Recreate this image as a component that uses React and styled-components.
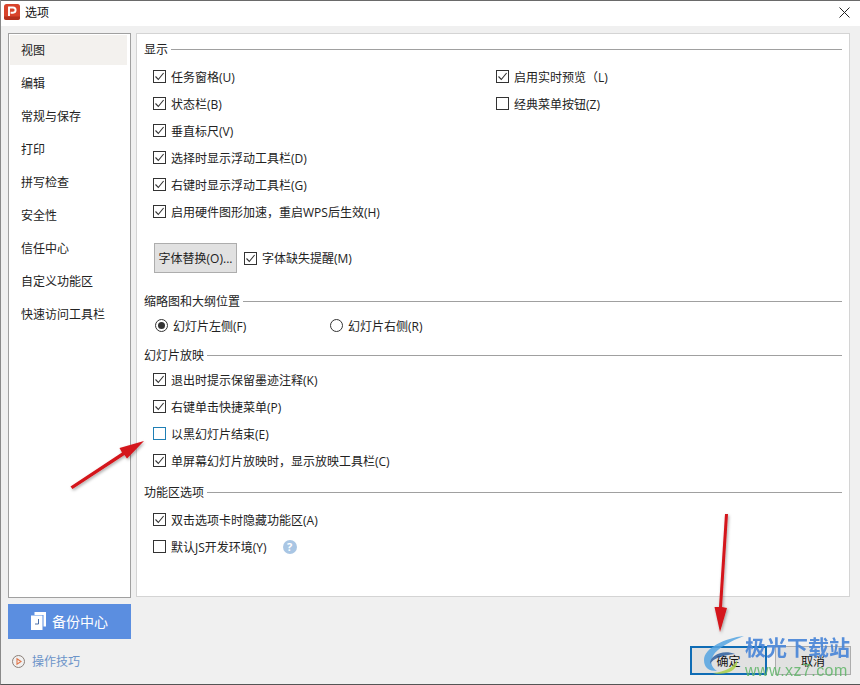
import React from "react";
import styled, { createGlobalStyle } from "styled-components";

const Global = createGlobalStyle`
  html, body { margin: 0; padding: 0; background: #f0f0f0; }
  body { font-family: "Open Sans", "Noto Sans CJK SC", sans-serif; font-size: 12px; color: #222; }
  * { box-sizing: border-box; }
`;
const Win = styled.div`
  position: relative; width: 860px; height: 685px; overflow: hidden; background: #f0f0f0;
  display: flex; flex-direction: column;
  border-bottom: 1px solid #555; border-left: 1px solid #8a8a8a;
`;
const TitleBar = styled.div`
  height: 26px; background: #fff; display: flex; align-items: center; gap: 5px; padding: 0 10px 3px 3px;
  flex: none; border-top: 1px solid #6a6a6a;
`;
const TitleText = styled.span`font-size: 12px; color: #111; flex: 1;`;
const Body = styled.div`
  display: grid; grid-template-columns: 123px 714px; gap: 5px; padding: 7px 0 0 7px; height: 572px; flex: none;
`;
const Sidebar = styled.nav`
  height: 565px; background: #fff; border: 1px solid #a0a0a0; padding: 1px 3px 0 1px;
  display: flex; flex-direction: column; gap: 3px;
`;
const NavItem = styled.div`
  height: 30px; display: flex; align-items: center; padding-left: 11px; font-size: 12px;
  background: ${p => (p.$active ? "#f3f1ee" : "transparent")}; color: #222;
`;
const Panel = styled.main`
  height: 564px; background: #fff; border: 1px solid #d4d4d4; padding: 6px 7px 0 7px;
`;
const Heading = styled.div`
  height: 18px; display: flex; align-items: center; gap: 3px; margin-top: ${p => p.$mt || 0}px; color: #222;
  &::after { content: ""; flex: 1; height: 1px; background: #a0a0a0; }
`;
const Columns = styled.div`
  display: grid; grid-template-columns: 343px 1fr; margin-top: ${p => p.$mt || 0}px; padding-left: 9px;
`;
const Rows = styled.div`
  display: flex; flex-direction: column; margin-top: ${p => p.$mt || 0}px; padding-left: ${p => p.$pl ?? 9}px;
`;
const Row = styled.div`
  height: 27px; display: flex; align-items: center; gap: 5px; white-space: nowrap;
`;
const Box = styled.span`
  width: 13px; height: 13px; flex: none; background: #fff; display: inline-flex;
  align-items: center; justify-content: center;
  border: 1px solid ${p => (p.$focus ? "#1f7fb5" : "#333")};
`;
const RadioRing = styled.span`
  width: 13px; height: 13px; flex: none; border-radius: 50%; border: 1px solid #333; background: #fff;
  display: inline-flex; align-items: center; justify-content: center;
  &::after { content: ""; width: 7px; height: 7px; border-radius: 50%; background: ${p => (p.$on ? "#333" : "transparent")}; }
`;
const RadioRow = styled.div`
  height: 27px; display: grid; grid-template-columns: 175px 1fr; padding-left: 11px; margin-top: 2px;
`;
const FontRow = styled.div`
  height: 30px; display: flex; align-items: center; margin-top: 18px; padding-left: 10px; gap: 7px;
`;
const SmallBtn = styled.button`
  width: 83px; height: 30px; border: 1px solid #adadad; background: #e1e1e1; font: inherit; color: #222; padding: 0;
`;
const Help = styled.span`
  width: 14px; height: 14px; border-radius: 50%; background: #a9c6e4; color: #fff; font-size: 11px; font-weight: 700;
  display: inline-flex; align-items: center; justify-content: center; margin-left: 11px;
`;
const Footer = styled.div`
  display: grid; grid-template-columns: 123px 1fr; padding: 0 9px 0 7px; flex: 1; min-height: 0; gap: 5px;
`;
const FooterLeft = styled.div`display: flex; flex-direction: column; padding-top: 6px;`;
const Backup = styled.div`
  height: 35px; background: #5b8ee0; color: #fff; font-size: 14px; display: flex; align-items: center;
  justify-content: center; gap: 6px; padding-bottom: 1px;
`;
const Tips = styled.div`
  display: flex; align-items: center; gap: 7px; color: #6c94c9; margin-top: 13px; padding-left: 4px; height: 18px;
`;
const FooterRight = styled.div`
  display: flex; justify-content: flex-end; gap: 8px; padding-top: 48px;
`;
const Btn = styled.button`
  width: ${p => (p.$primary ? 77 : 76)}px; height: 29px; font: inherit; color: #111; background: #e1e1e1; padding: 0;
  border: ${p => (p.$primary ? "2px solid #0f6cb5" : "1px solid #adadad")};
`;
const Overlay = styled.svg`position: absolute; left: 0; top: 0; pointer-events: none;`;
const Mark = styled.div`
  position: absolute; left: 744px; top: 633px; width: 112px; pointer-events: none; line-height: 1;
`;
const MarkTitle = styled.div`
  font-size: 21px; font-weight: 700; color: #4a86d8; opacity: .92; white-space: nowrap;
  font-family: "Noto Sans CJK SC", sans-serif; line-height: 26px;
`;
const MarkUrl = styled.div`
  font-size: 16px; font-weight: 400; color: #5fb568; opacity: .85; letter-spacing: .45px; margin-top: 3px;
  font-family: "Liberation Sans", sans-serif; white-space: nowrap; line-height: 17px;
`;

const Check = ({ on = true, focus }) => (
  <Box $focus={focus}>
    {on && (
      <svg width="11" height="11" viewBox="0 0 11 11" fill="none">
        <path d="M1.5 5.5 L4.3 8.5 L9.6 2" stroke="#333" strokeWidth="1.1" />
      </svg>
    )}
  </Box>
);
const CheckRow = ({ label, on, focus, children }) => (
  <Row><Check on={on} focus={focus} /><span>{label}</span>{children}</Row>
);

const nav = ["视图", "编辑", "常规与保存", "打印", "拼写检查", "安全性", "信任中心", "自定义功能区", "快速访问工具栏"];

export default function App() {
  return (
    <>
      <Global />
      <Win>
        <TitleBar>
          <svg width="16" height="16" viewBox="0 0 16 16">
            <rect width="16" height="16" rx="2.5" fill="#d8432b" />
            <path d="M0 12.5 H16 V13.5 A2.5 2.5 0 0 1 13.5 16 H2.5 A2.5 2.5 0 0 1 0 13.5 Z" fill="#b3301d" />
            <path d="M5 12 V3.5 H9 A2.6 2.6 0 0 1 9 8.7 H6.6" fill="none" stroke="#fff" strokeWidth="1.9" />
          </svg>
          <TitleText>选项</TitleText>
          <svg width="11" height="11" viewBox="0 0 11 11"><path d="M.5.5 10.5 10.5M10.5.5.5 10.5" stroke="#222" strokeWidth="1" /></svg>
        </TitleBar>
        <Body>
          <Sidebar>
            {nav.map((n, i) => <NavItem key={n} $active={i === 0}>{n}</NavItem>)}
          </Sidebar>
          <Panel>
            <Heading>显示</Heading>
            <Columns $mt={5}>
              <div>
                <CheckRow label="任务窗格(U)" />
                <CheckRow label="状态栏(B)" />
                <CheckRow label="垂直标尺(V)" />
                <CheckRow label="选择时显示浮动工具栏(D)" />
                <CheckRow label="右键时显示浮动工具栏(G)" />
                <CheckRow label="启用硬件图形加速，重启WPS后生效(H)" />
              </div>
              <div>
                <CheckRow label="启用实时预览（L)" />
                <CheckRow label="经典菜单按钮(Z)" on={false} />
              </div>
            </Columns>
            <FontRow>
              <SmallBtn>字体替换(O)...</SmallBtn>
              <Row><Check /><span>字体缺失提醒(M)</span></Row>
            </FontRow>
            <Heading $mt={19}>缩略图和大纲位置</Heading>
            <RadioRow>
              <Row><RadioRing $on /><span>幻灯片左侧(F)</span></Row>
              <Row><RadioRing /><span>幻灯片右侧(R)</span></Row>
            </RadioRow>
            <Heading $mt={7}>幻灯片放映</Heading>
            <Rows $mt={2}>
              <CheckRow label="退出时提示保留墨迹注释(K)" />
              <CheckRow label="右键单击快捷菜单(P)" />
              <CheckRow label="以黑幻灯片结束(E)" on={false} focus />
              <CheckRow label="单屏幕幻灯片放映时，显示放映工具栏(C)" />
            </Rows>
            <Heading $mt={9}>功能区选项</Heading>
            <Rows $mt={5}>
              <CheckRow label="双击选项卡时隐藏功能区(A)" />
              <CheckRow label="默认JS开发环境(Y)" on={false}><Help>?</Help></CheckRow>
            </Rows>
          </Panel>
        </Body>
        <Footer>
          <FooterLeft>
            <Backup>
              <svg width="15" height="18" viewBox="0 0 15 18">
                <path d="M3.5 0 H15 V14.5 H12.5 V3 H3.5 Z" fill="#fff" />
                <path d="M0 3.5 H11.5 V18 H0 Z" fill="#fff" />
                <path d="M7.5 7 V12 H4" fill="none" stroke="#4a6fa8" strokeWidth="1" />
              </svg>
              <span>备份中心</span>
            </Backup>
            <Tips>
              <svg width="13" height="13" viewBox="0 0 13 13" fill="none">
                <circle cx="6.5" cy="6.5" r="6" stroke="#8a7f78" />
                <path d="M5 3.8 L9 6.5 L5 9.2 Z" stroke="#e0764a" strokeWidth="1.1" />
              </svg>
              <span>操作技巧</span>
            </Tips>
          </FooterLeft>
          <FooterRight>
            <Btn $primary>确定</Btn>
            <Btn>取消</Btn>
          </FooterRight>
        </Footer>

        <Overlay width="860" height="685" viewBox="0 0 860 685">
          <defs>
            <filter id="sh" x="-30%" y="-30%" width="160%" height="160%">
              <feDropShadow dx="1" dy="1.5" stdDeviation="1.4" floodColor="#000" floodOpacity=".35" />
            </filter>
          </defs>
          <g filter="url(#sh)">
            <path d="M69.5 486.5 L121 452.5 L118.5 448 L143 441 L126 458.5 L123.5 455 L71.5 489 Z" fill="#d4141a" />
            <path d="M724 514 L727 514 L721 607 L726 608 L719 632 L713.5 607 L718 607 Z" fill="#d4141a" />
          </g>
          <g opacity=".85">
            <path d="M743 636 C724 638 703 648 703 660 C703 668 708 671 716 671 C710 667 709 662 712 656 C716 648 730 641 743 636 Z" fill="#55a5e2" />
            <path d="M734 654 C722 649 709 655 709 664 C712 658 723 655 734 654 Z" fill="#2f5f9f" />
            <path d="M736 660 C733 667 724 672 712 673 C724 676 738 671 736 660 Z" fill="#a8d04a" />
          </g>
        </Overlay>
        <Mark>
          <MarkTitle>极光下载站</MarkTitle>
          <MarkUrl>www.xz7.com</MarkUrl>
        </Mark>
      </Win>
    </>
  );
}
